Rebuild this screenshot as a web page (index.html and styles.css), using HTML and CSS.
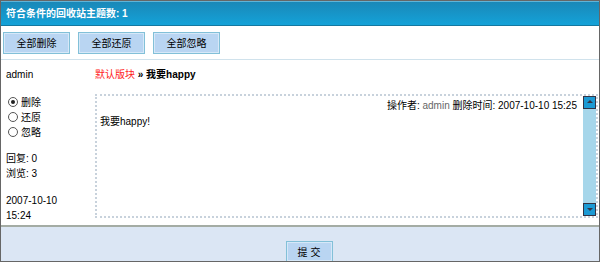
FILE: index.html
```html
<!DOCTYPE html>
<html>
<head>
    <title>回收站</title>
    <meta charset="utf-8">
    <link rel="stylesheet" href="styles.css">
</head>
<body>
    <div class="container">
        <div class="header">符合条件的回收站主题数: 1</div>

        <div class="toolbar">
            <button type="button" class="btn">全部删除</button>
            <button type="button" class="btn">全部还原</button>
            <button type="button" class="btn">全部忽略</button>
        </div>

        <div class="topic">
            <div class="side">
                <div class="author">admin</div>
                <label class="option"><input type="radio" name="op" checked>删除</label>
                <label class="option"><input type="radio" name="op">还原</label>
                <label class="option"><input type="radio" name="op">忽略</label>
                <div class="stats">
                    <div>回复: 0</div>
                    <div>浏览: 3</div>
                </div>
                <div class="date">
                    <div>2007-10-10</div>
                    <div>15:24</div>
                </div>
            </div>
            <div class="main">
                <div class="crumb"><span class="forum">默认版块</span> <b>» 我要happy</b></div>
                <div class="message">
                    <div class="message-body">
                        <div class="meta">操作者: <span class="operator">admin</span> 删除时间: 2007-10-10 15:25</div>
                        <div class="text">我要happy!</div>
                    </div>
                    <div class="scrollbar">
                        <div class="arrow up"></div>
                        <div class="track"></div>
                        <div class="arrow down"></div>
                    </div>
                </div>
            </div>
        </div>

        <div class="footer">
            <button type="button" class="btn submit">提 交</button>
        </div>
    </div>
</body>
</html>
```

FILE: styles.css
```css
body {
    margin: 0;
    font-family: "Liberation Sans", Arial, "Noto Sans CJK SC", sans-serif;
    font-size: 10px;
    color: #000;
}

.container {
    width: 598px;
    height: 260px;
    border: 1px solid #666;
    overflow: hidden;
    display: flex;
    flex-direction: column;
}

.header {
    height: 23px;
    line-height: 24px;
    padding-left: 5px;
    color: #fff;
    font-weight: bold;
    background: linear-gradient(#1a88b8, #14a2d8);
    border-top: 1px solid #5fb4d8;
    border-bottom: 1px solid #1478a0;
}

.toolbar {
    height: 33px;
    display: flex;
    align-items: center;
    gap: 8px;
    padding-left: 2px;
    border-bottom: 1px solid #d0e2ec;
}

.btn {
    width: 67px;
    height: 22px;
    padding: 0;
    font: inherit;
    color: #000;
    background: #b9d5f2;
    border: 1px solid #82c0d8;
    box-shadow: inset 0 0 0 1px #d6e8f8;
}

.topic {
    flex: 1;
    display: flex;
    border-bottom: 2px solid #a4aca4;
}

.side {
    width: 89px;
    padding-left: 5px;
}

.author {
    margin-top: 7px;
    height: 15px;
    line-height: 15px;
}

.option {
    display: flex;
    align-items: center;
    height: 15px;
    padding-left: 2px;
}

.author + .option {
    margin-top: 12px;
}

.option input {
    appearance: none;
    width: 10px;
    height: 10px;
    margin: 0 3px 0 0;
    border: 1px solid #555;
    border-radius: 50%;
    background: #fff;
    position: relative;
}

.option input:checked::after {
    content: "";
    position: absolute;
    left: 2px;
    top: 2px;
    width: 4px;
    height: 4px;
    border-radius: 50%;
    background: #222;
}

.stats {
    margin-top: 12px;
    line-height: 15px;
}

.date {
    margin-top: 12px;
    line-height: 15px;
}

.main {
    flex: 1;
    padding-right: 1px;
}

.crumb {
    margin-top: 7px;
    height: 15px;
    line-height: 15px;
}

.forum {
    color: #f22;
}

.message {
    margin-top: 12px;
    height: 120px;
    border: 2px dotted #c8d2dc;
    display: flex;
}

.message-body {
    flex: 1;
    padding: 3px 6px 0 3px;
}

.meta {
    text-align: right;
    line-height: 14px;
}

.operator {
    color: #666;
}

.text {
    margin-top: 2px;
    line-height: 14px;
}

.scrollbar {
    width: 13px;
    display: flex;
    flex-direction: column;
    background: #a6d6ea;
}

.track {
    flex: 1;
}

.arrow {
    height: 11px;
    background: #1c9ad4;
    border: 1px solid #334;
    position: relative;
}

.arrow::after {
    content: "";
    position: absolute;
    left: 3px;
    width: 0;
    height: 0;
    border-left: 3px solid transparent;
    border-right: 3px solid transparent;
}

.arrow.up::after {
    top: 3px;
    border-bottom: 3px solid #334;
}

.arrow.down::after {
    top: 4px;
    border-top: 3px solid #334;
}

.footer {
    height: 34px;
    background: #dbe6f4;
    display: flex;
    justify-content: center;
    align-items: flex-end;
}

.submit {
    width: 47px;
    height: 21px;
    margin-left: 18px;
    margin-bottom: -1px;
}
```
